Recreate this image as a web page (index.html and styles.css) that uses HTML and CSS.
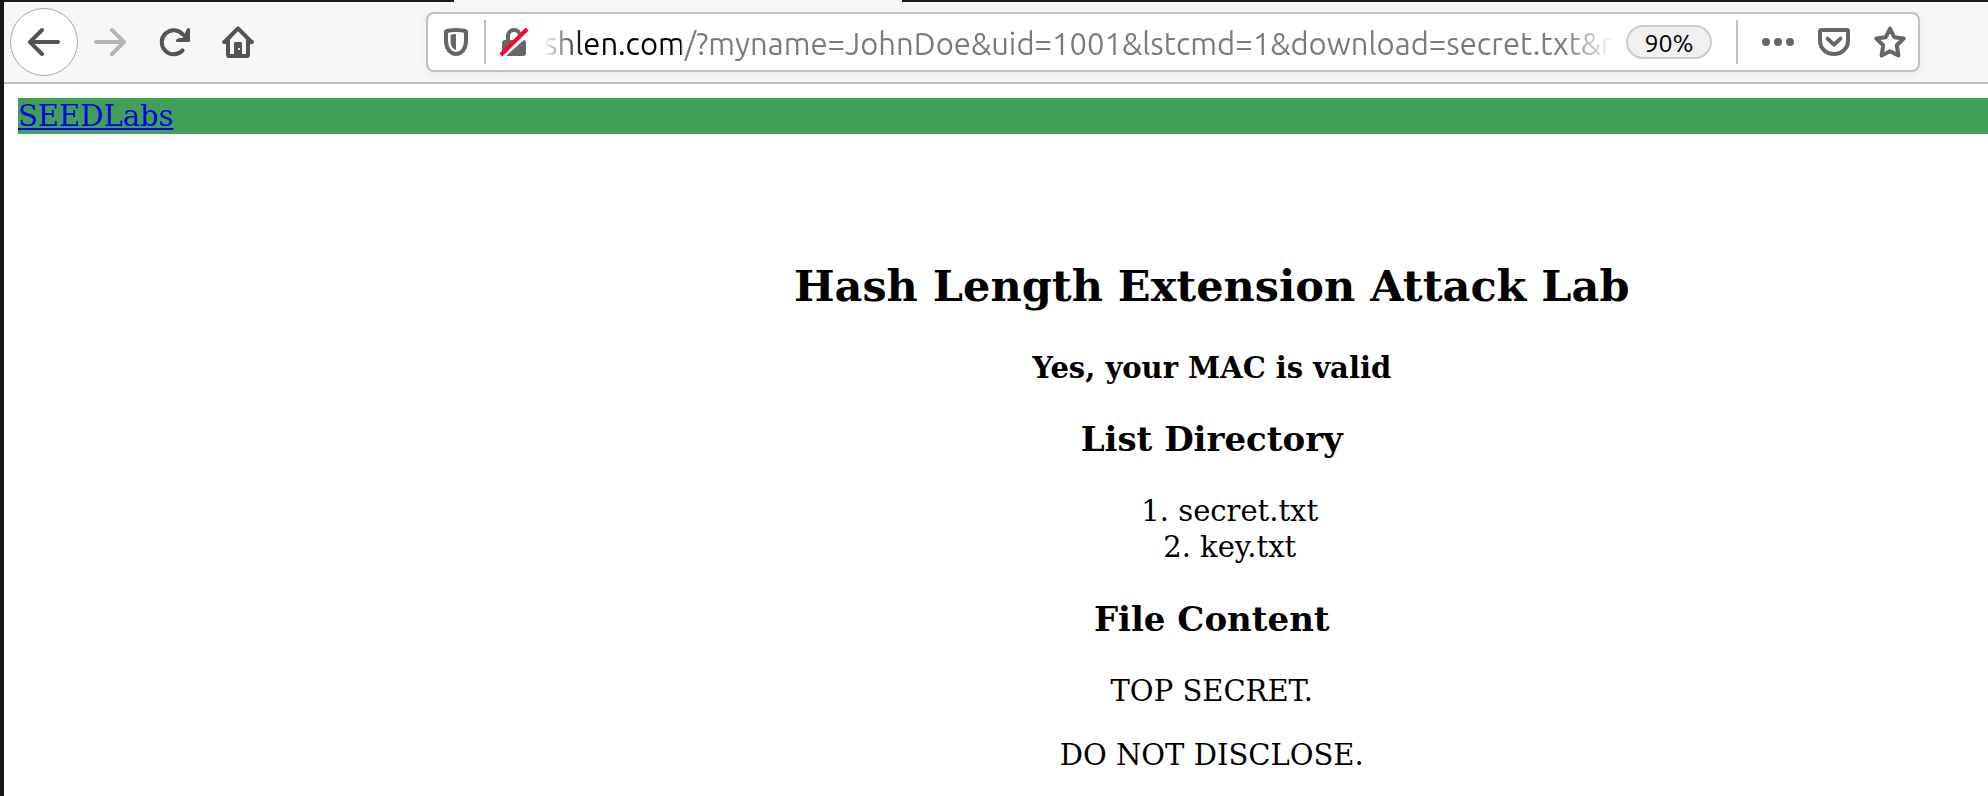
FILE: index.html
```html
<!DOCTYPE html>
<html lang="en">
<head>
<meta charset="utf-8">
<title>Hash Length Extension Attack Lab</title>
<link rel="stylesheet" href="styles.css">
</head>
<body>
<div class="window">
  <div class="tabstrip"><span class="active-tab"></span></div>
  <header class="toolbar">
    <nav class="nav-buttons" aria-label="Browser navigation">
      <button class="tool back" type="button" aria-label="Back">
        <svg class="icon" viewBox="0 0 16 16"><path d="M15 7H3.414l4.293-4.293a1 1 0 0 0-1.414-1.414l-6 6a1 1 0 0 0 0 1.414l6 6a1 1 0 0 0 1.414-1.414L3.414 9H15a1 1 0 0 0 0-2z"/></svg>
      </button>
      <button class="tool forward" type="button" aria-label="Forward" disabled>
        <svg class="icon" viewBox="0 0 16 16"><path d="M1 7h11.586L8.293 2.707a1 1 0 0 1 1.414-1.414l6 6a1 1 0 0 1 0 1.414l-6 6a1 1 0 0 1-1.414-1.414L12.586 9H1a1 1 0 0 1 0-2z"/></svg>
      </button>
      <button class="tool" type="button" aria-label="Reload">
        <svg class="icon" viewBox="0 0 16 16"><path class="line" d="M12.400 4.200A6 6 0 1 0 12.300 12.200"/><path d="M15.200 1a.8.800 0 0 1 .8.800V7.400a.6.600 0 0 1-.6.600H9.700a.7.700 0 0 1-.5-1.200l1.200-.8h1.800l2.300-4.600a.8.8 0 0 1 .7-.4z"/></svg>
      </button>
      <button class="tool" type="button" aria-label="Home">
        <svg class="icon" viewBox="0 0 16 16"><path class="line" d="M1 8h1.600M15 8h-1.600M1.300 8L8 1.200 14.700 8M3 7v7.200a.8.8 0 0 0 .8.8h8.400a.8.8 0 0 0 .8-.8V7"/><path fill-rule="evenodd" d="M6.700 8h2.600a.7.7 0 0 1 .7.7V15H6V8.700a.7.7 0 0 1 .7-.7zM8.100 11v1h.9v-1z"/></svg>
      </button>
    </nav>
    <div class="urlbar">
      <button class="tool small" type="button" aria-label="Tracking protection">
        <svg class="icon" viewBox="0 0 16 16"><path class="line" d="M8 2C10 2 12 2.300 13 2.700V7.500C13 11 11 14 8 14S3 11 3 7.500V2.700C4 2.300 6 2 8 2z"/><path d="M8 4v8C6 11.500 5.300 9.500 5.300 7.500V4.500Q6.500 4 8 4z"/></svg>
      </button>
      <span class="divider"></span>
      <button class="tool small lock" type="button" aria-label="Connection is not secure">
        <svg class="icon" viewBox="0 0 16 16"><path class="line" d="M5 8V5a3 3 0 0 1 6 0v3"/><path d="M3.500 7h9a1.500 1.500 0 0 1 1.500 1.500v5a1.500 1.500 0 0 1-1.500 1.500h-9A1.500 1.500 0 0 1 2 13.500v-5A1.500 1.500 0 0 1 3.500 7z"/><path class="gap" d="M2.200 14.700L15.500 2.600"/><path class="slash" d="M1.400 14.500L14.600 1.500"/></svg>
      </button>
      <input class="address" type="text" aria-label="Address" spellcheck="false" value="shlen.com/?myname=JohnDoe&amp;uid=1001&amp;lstcmd=1&amp;download=secret.txt&amp;r">
      <button class="zoom-level" type="button">90%</button>
      <span class="divider"></span>
      <div class="page-actions">
        <button class="tool small" type="button" aria-label="Page actions">
          <svg class="icon" viewBox="0 0 16 16"><circle cx="2" cy="8" r="2"/><circle cx="8" cy="8" r="2"/><circle cx="14" cy="8" r="2"/></svg>
        </button>
        <button class="tool small" type="button" aria-label="Save to Pocket">
          <svg class="icon" viewBox="0 0 16 16"><path class="line" d="M1.500 2h13a.5.500 0 0 1 .5.500V7.500A7 6.500 0 0 1 1 7.500V2.500A.5.500 0 0 1 1.500 2z"/><path class="line" d="M4.800 6.300L8 9.300l3.200-3"/></svg>
        </button>
        <button class="tool small" type="button" aria-label="Bookmark this page">
          <svg class="icon" viewBox="0 0 16 16"><path class="line" d="M8 1.300l2.100 4.300 4.700.7-3.400 3.300.8 5.200L8 12.600l-4.200 2.200.8-5.200L1.200 6.300l4.700-.7z"/></svg>
        </button>
      </div>
    </div>
  </header>
  <div class="page">
    <div class="site-bar"><a href="#">SEEDLabs</a></div>
    <main class="content">
      <h1>Hash Length Extension Attack Lab</h1>
      <p class="status">Yes, your MAC is valid</p>
      <h2>List Directory</h2>
      <ol class="files">
        <li>secret.txt</li>
        <li>key.txt</li>
      </ol>
      <h2>File Content</h2>
      <p>TOP SECRET.</p>
      <p>DO NOT DISCLOSE.</p>
    </main>
  </div>
</div>
</body>
</html>
```

FILE: styles.css
```css
* {
  box-sizing: border-box;
}

body {
  margin: 0;
  background: #fff;
  color: #000;
  font: 29px/36px "DejaVu Serif", serif;
}

.window {
  min-height: 100vh;
  border-left: 4px solid #1a1612;
}

.tabstrip {
  height: 2px;
  padding-left: 450px;
  background: #1f1c1d;
}

.active-tab {
  display: block;
  width: 448px;
  height: 2px;
  background: #f5f5f6;
}

.toolbar {
  display: flex;
  align-items: center;
  height: 82px;
  padding: 0 68px 0 6px;
  background: #f7f7f7;
  border-bottom: 2px solid #bfbfbf;
}

.nav-buttons {
  display: flex;
  align-items: center;
}

.tool {
  display: flex;
  align-items: center;
  justify-content: center;
  flex: none;
  width: 64px;
  height: 64px;
  padding: 0;
  border: 0;
  background: none;
  color: #545454;
}

.back {
  width: 68px;
  height: 68px;
  border: 1px solid #a8a8a8;
  border-radius: 50%;
  background: #fff;
}

.forward {
  color: #b5b5b5;
}

.icon {
  width: 32px;
  height: 32px;
  fill: currentColor;
}

.line {
  fill: none;
  stroke: currentColor;
  stroke-width: 2;
  stroke-linecap: round;
  stroke-linejoin: round;
}

.urlbar {
  display: flex;
  align-items: center;
  flex: 1;
  height: 60px;
  margin-left: 156px;
  padding: 0 12px;
  background: #fff;
  border: 2px solid #c0c0c0;
  border-radius: 8px;
  box-shadow: 0 2px 8px rgba(0, 0, 0, 0.06);
}

.small {
  width: 32px;
  height: 32px;
  color: #666;
}

.lock {
  margin-right: 14px;
}

.gap {
  stroke: #fff;
  stroke-width: 3;
}

.slash {
  stroke: #ff0039;
  stroke-width: 2;
}

.divider {
  width: 2px;
  height: 44px;
  margin: 0 12px;
  background: #c0c0c0;
}

.address {
  flex: 1;
  min-width: 0;
  height: 50px;
  padding: 2px 0 0;
  border: 0;
  outline: 0;
  font: 31px/48px Ubuntu, "Noto Sans", sans-serif;
  color: transparent;
  background: linear-gradient(to right, transparent, #000 40px, #000 137px, #7a7a7a 137px, #7a7a7a calc(100% - 50px), transparent);
  background-clip: text;
  -webkit-background-clip: text;
}

.zoom-level {
  width: 86px;
  height: 34px;
  margin: 0 12px;
  padding: 0;
  border: 2px solid #cdcdcd;
  border-radius: 17px;
  background: #f0f0f0;
  color: #000;
  font: 25px/32px Ubuntu, "Noto Sans", sans-serif;
}

.page-actions {
  display: flex;
  gap: 24px;
  margin-left: 12px;
}

.page {
  padding: 14px 0 0 14px;
}

.site-bar {
  background: #3fa156;
}

.site-bar a {
  color: #00e;
  text-decoration-thickness: 2px;
  text-underline-offset: 2px;
}

/* The lab column sits right of centre, beyond the link bar. */
.content {
  padding: 126px 0 0 21vw;
  text-align: center;
}

h1 {
  margin: 0 0 38px;
  font-size: 43px;
  line-height: 52px;
}

h2 {
  margin: 0 0 34px;
  font-size: 34px;
  line-height: 40px;
}

p {
  margin: 0 0 28px;
}

.status {
  margin-bottom: 33px;
  font-weight: bold;
}

.files {
  margin: 0 0 34px;
  padding: 0 0 0 36px;
  list-style-position: inside;
}
```
